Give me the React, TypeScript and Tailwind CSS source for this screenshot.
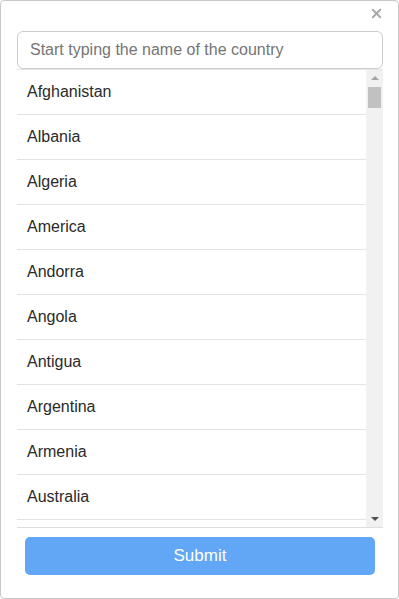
import { X } from "lucide-react"

const countries = [
  "Afghanistan",
  "Albania",
  "Algeria",
  "America",
  "Andorra",
  "Angola",
  "Antigua",
  "Argentina",
  "Armenia",
  "Australia",
]

export default function App() {
  return (
    <div
      className="w-[399px] h-[599px] bg-white border border-[#c8c8c8] rounded-[4px] relative"
      style={{ fontFamily: '"Liberation Sans", Arial, sans-serif' }}
    >
      <button className="absolute top-[5px] right-[14px] text-[#a8a8a8]" aria-label="Close">
        <X className="w-[15px] h-[15px]" strokeWidth={3} />
      </button>
      <div className="pt-[30px] pl-4 pr-[15px]">
        <input
          className="w-full h-[38px] border border-[#c9ccd1] rounded-[6px] px-3 text-[16px] text-[#333] placeholder:text-[#757575] outline-none"
          placeholder="Start typing the name of the country"
        />
        <div className="flex h-[459px] border-b border-[#dedede] border-t border-t-[#e6e6e6]">
          {/* list is scrolled to the top, rows past Australia are out of view */}
          <ul className="flex-1 overflow-hidden">
            {countries.map((c) => (
              <li
                key={c}
                className="h-[45px] flex items-center pl-[10px] text-[16px] text-[#2a2a2a] border-b border-[#e3e3e3]"
              >
                {c}
              </li>
            ))}
          </ul>
          <div className="w-[17px] bg-[#f1f1f1] flex flex-col items-center">
            <div className="h-[16px] flex items-center justify-center">
              <div className="w-0 h-0 border-l-[4px] border-r-[4px] border-b-[4px] border-l-transparent border-r-transparent border-b-[#a3a3a3]" />
            </div>
            <div className="w-[13px] h-[21px] bg-[#c1c1c1] mt-[1px]" />
            <div className="flex-1" />
            <div className="h-[16px] flex items-center justify-center">
              <div className="w-0 h-0 border-l-[4px] border-r-[4px] border-t-[4px] border-l-transparent border-r-transparent border-t-[#505050]" />
            </div>
          </div>
        </div>
        <div className="px-2 pt-[9px]">
          <button className="w-full h-[38px] rounded-[5px] bg-[#61a7f5] text-white text-[17px]">
            Submit
          </button>
        </div>
      </div>
    </div>
  )
}
